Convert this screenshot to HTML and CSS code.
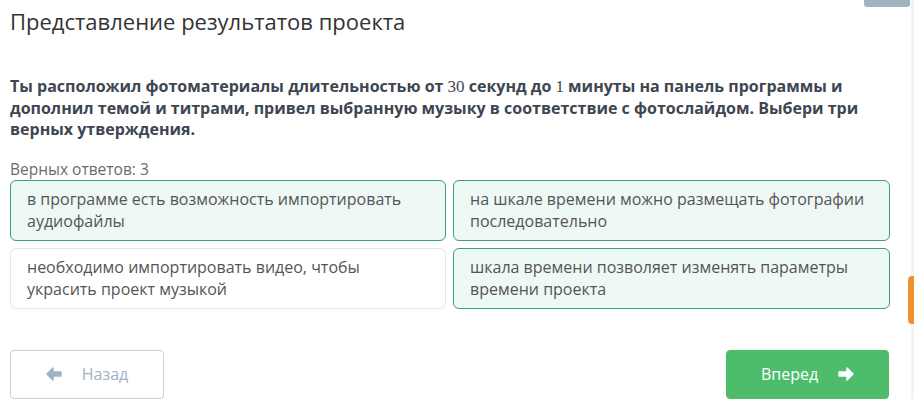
FILE: index.html
```html
<!DOCTYPE html>
<html lang="ru">
<head>
<meta charset="utf-8">
<link rel="stylesheet" href="styles.css">
</head>
<body>
<div class="page">
  <main class="main">
    <h1 class="title">Представление результатов проекта</h1>
    <p class="question">Ты расположил фотоматериалы длительностью от <span class="num">30</span> секунд до <span class="num">1</span> минуты на панель программы и дополнил темой и титрами, привел выбранную музыку в соответствие с фотослайдом. Выбери три верных утверждения.</p>
    <div class="count">Верных ответов: 3</div>
    <div class="options">
      <div class="option selected">в программе есть возможность импортировать аудиофайлы</div>
      <div class="option selected">на шкале времени можно размещать фотографии последовательно</div>
      <div class="option">необходимо импортировать видео, чтобы украсить проект музыкой</div>
      <div class="option selected">шкала времени позволяет изменять параметры времени проекта</div>
    </div>
    <div class="nav">
      <button class="btn btn-back">
        <svg class="arrow" width="16" height="14" viewBox="0 0 16 14"><path d="M7 1 L1 7 L7 13 L7 9 L15 9 L15 5 L7 5 Z" fill="currentColor" stroke="currentColor" stroke-width="1.5" stroke-linejoin="round"/></svg>
        <span>Назад</span>
      </button>
      <button class="btn btn-next">
        <span>Вперед</span>
        <svg class="arrow" width="16" height="14" viewBox="0 0 16 14"><path d="M9 1 L15 7 L9 13 L9 9 L1 9 L1 5 L9 5 Z" fill="currentColor" stroke="currentColor" stroke-width="1.5" stroke-linejoin="round"/></svg>
      </button>
    </div>
  </main>
  <aside class="rail">
    <div class="rail-top"></div>
    <div class="rail-tab"></div>
  </aside>
</div>
</body>
</html>
```
FILE: styles.css
```css
html, body {
  margin: 0;
  padding: 0;
  background: #ffffff;
  font-family: "Open Sans", "Noto Sans", sans-serif;
}
.page {
  display: flex;
  width: 914px;
  height: 399px;
  overflow: hidden;
  position: relative;
}
.main {
  width: 880px;
  padding: 0 0 0 10px;
}
.title {
  margin: 6px 0 0;
  font-size: 22px;
  font-weight: 400;
  line-height: 30px;
  color: #333333;
}
.question {
  margin: 40px 0 0;
  font-size: 16px;
  font-weight: 700;
  line-height: 21.5px;
  color: #3d4651;
}
.num {
  font-family: "Liberation Serif", serif;
  font-weight: 400;
  font-size: 17px;
  line-height: 1;
}
.count {
  margin-top: 17px;
  font-size: 15.5px;
  line-height: 22px;
  color: #6b6b6b;
}
.options {
  display: grid;
  grid-template-columns: 436px 437px;
  column-gap: 7px;
  row-gap: 7px;
  margin-top: 0;
}
.option {
  box-sizing: border-box;
  height: 61px;
  padding: 7px 16px;
  border: 1px solid #e3e6e8;
  border-radius: 6px;
  background: #ffffff;
  font-size: 16px;
  line-height: 22px;
  color: #555555;
}
.option.selected {
  border-color: #3a9d8c;
  background: #eef8f5;
}
.nav {
  display: flex;
  justify-content: space-between;
  margin-top: 41px;
  width: 879px;
}
.btn {
  box-sizing: border-box;
  height: 49px;
  border-radius: 4px;
  font-family: "Open Sans", "Noto Sans", sans-serif;
  font-size: 16px;
  display: flex;
  align-items: center;
  justify-content: center;
  gap: 20px;
  cursor: pointer;
}
.btn-back {
  width: 154px;
  background: #ffffff;
  border: 1px solid #c9d0d6;
  color: #9fb3c5;
}
.btn-next {
  width: 163px;
  background: #4dbd6b;
  border: 1px solid #4dbd6b;
  color: #ffffff;
}
.btn-next .arrow {
  color: #ffffff;
}
.rail {
  flex: 1;
  position: relative;
  background: linear-gradient(to right, #ffffff 0, #ffffff 21px, #f2f3f6 21px);
}
.rail-top {
  position: absolute;
  left: -26px;
  top: 0;
  width: 46px;
  height: 7px;
  background: #a0b3bf;
  border-radius: 0 0 3px 3px;
}
.rail-tab {
  position: absolute;
  right: 0;
  top: 276px;
  width: 6px;
  height: 48px;
  background: #f0912d;
  border-radius: 4px 0 0 4px;
}
```
